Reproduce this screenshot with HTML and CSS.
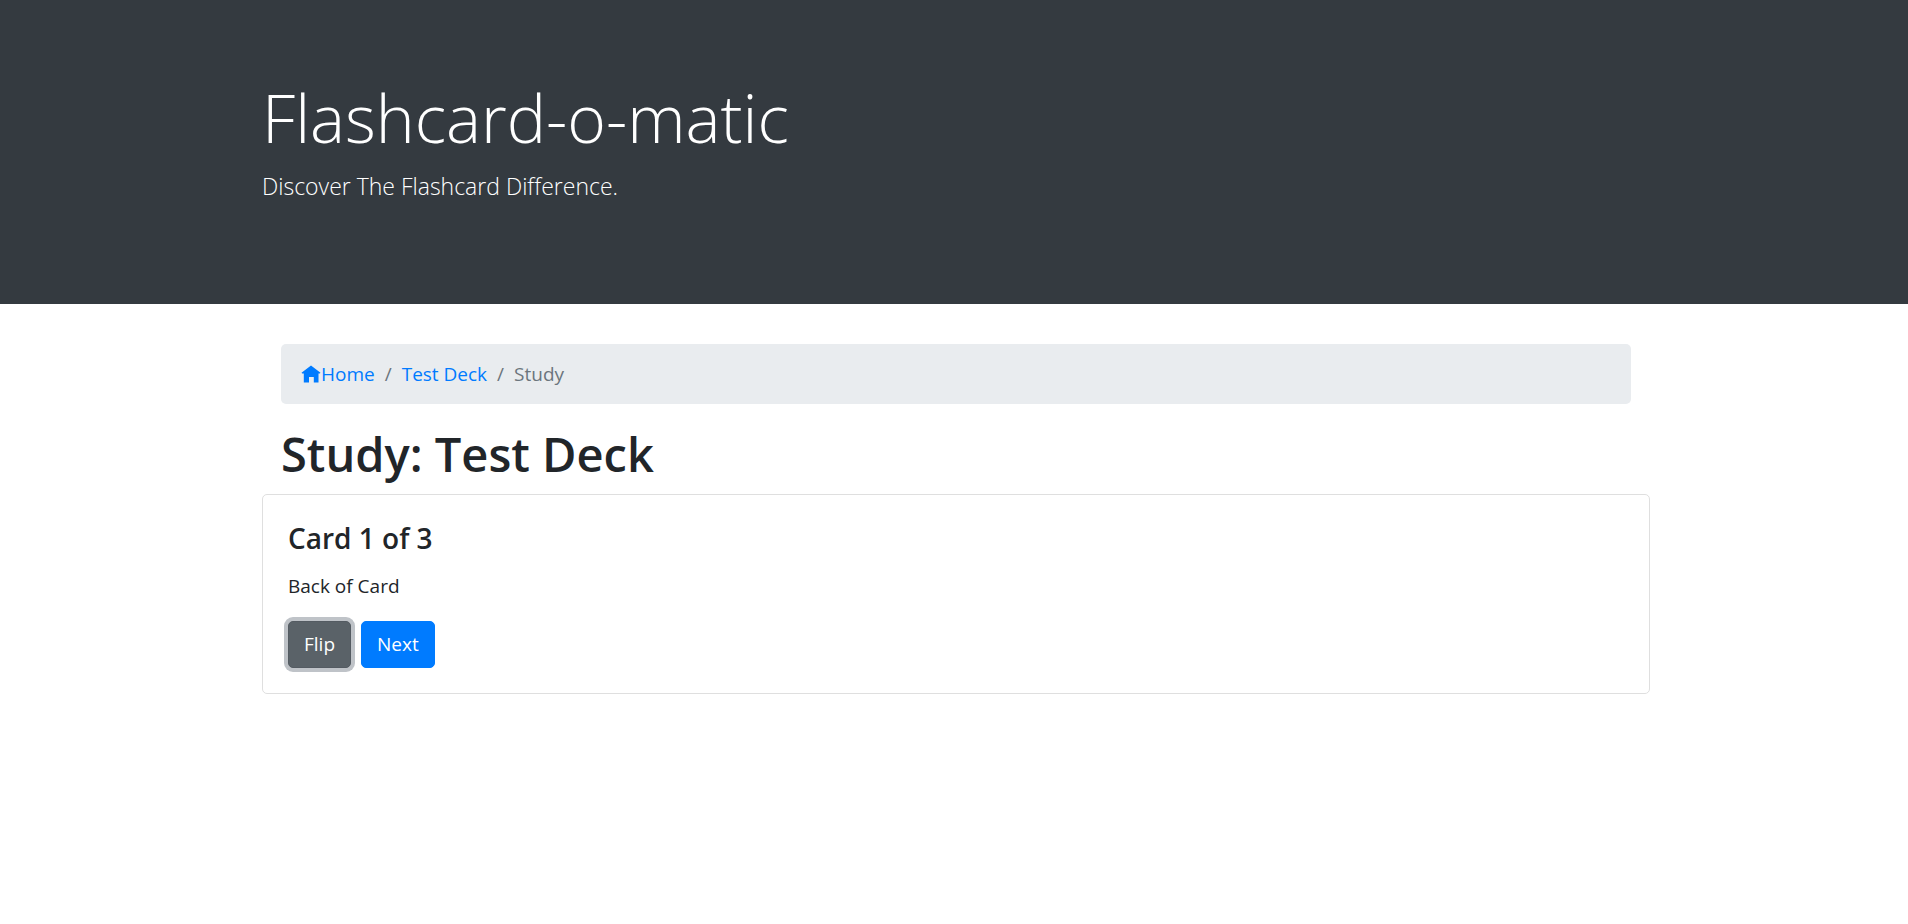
FILE: index.html
```html
<!DOCTYPE html>
<html lang="en">
<head>
<meta charset="utf-8">
<meta name="viewport" content="width=device-width, initial-scale=1">
<title>Flashcard-o-matic</title>
<link rel="stylesheet" href="styles.css">
</head>
<body>
<header class="jumbotron">
  <div class="container">
    <h1 class="display">Flashcard-o-matic</h1>
    <p class="lead">Discover The Flashcard Difference.</p>
  </div>
</header>
<main class="container">
  <div class="intro">
    <nav aria-label="breadcrumb">
      <ol class="breadcrumb">
        <li class="crumb"><a class="crumb-link" href="#"><svg class="home-icon" viewBox="0 0 20 20" aria-hidden="true"><path d="M10 1.5 L19.5 8.8 L18.8 9.4 H17.5 V18.5 H12.8 V13 H8 V18.5 H2.8 V9.4 H1.2 L.5 8.8 Z"/></svg>Home</a></li>
        <li class="crumb"><a class="crumb-link" href="#">Test Deck</a></li>
        <li class="crumb" aria-current="page">Study</li>
      </ol>
    </nav>
    <h2 class="page-title">Study: Test Deck</h2>
  </div>
  <section class="card">
    <h3 class="card-title">Card 1 of 3</h3>
    <p class="card-text">Back of Card</p>
    <div class="actions">
      <button class="btn btn-flip" type="button">Flip</button>
      <button class="btn btn-next" type="button">Next</button>
    </div>
  </section>
</main>
</body>
</html>
```
FILE: styles.css
```css
*, *::before, *::after { box-sizing: border-box; }
body {
  margin: 0;
  background: #fff;
  color: #212529;
  font-family: "Open Sans", "Noto Sans", sans-serif;
  font-size: 19px;
  line-height: 30px;
}
h1, h2, h3, p, ol { margin: 0; padding: 0; }
.container {
  width: 100%;
  max-width: 1426px;
  margin: 0 auto;
  padding: 0 17px 0 21px;
}
.jumbotron {
  padding: 75px 0 99px;
  margin-bottom: 40px;
  background: #343a40;
  color: #fff;
}
.display {
  margin-bottom: 8px;
  font-size: 66px;
  font-weight: 300;
  line-height: 84px;
}
.lead {
  font-size: 23px;
  font-weight: 300;
  line-height: 38px;
}
.intro { padding: 0 19px; }
.breadcrumb {
  display: flex;
  flex-wrap: wrap;
  margin-bottom: 20px;
  padding: 15px 20px;
  border-radius: 5px;
  background: #e9ecef;
  list-style: none;
}
.crumb { display: flex; color: #6c757d; }
.crumb + .crumb::before {
  content: "/";
  padding: 0 10px;
}
.crumb-link {
  display: flex;
  align-items: center;
  color: #007bff;
  text-decoration: none;
}
.home-icon { width: 20px; height: 20px; fill: #007bff; }
.page-title {
  margin-bottom: 10px;
  font-size: 47px;
  font-weight: 600;
  line-height: 60px;
}
.card {
  padding: 25px;
  border: 1px solid #dfdfdf;
  border-radius: 5px;
}
.card-title {
  margin-bottom: 15px;
  font-size: 28px;
  font-weight: 600;
  line-height: 36px;
}
.card-text { margin-bottom: 20px; }
.actions { display: flex; gap: 10px; }
.btn {
  padding: 8px 15px;
  border: 1px solid;
  border-radius: 5px;
  color: #fff;
  font: inherit;
  line-height: 29px;
  cursor: pointer;
}
.btn-flip {
  border-color: #545b62;
  background: #5a6268;
  box-shadow: 0 0 0 4px #bfc3c8;
}
.btn-next { border-color: #007bff; background: #007bff; }
```
